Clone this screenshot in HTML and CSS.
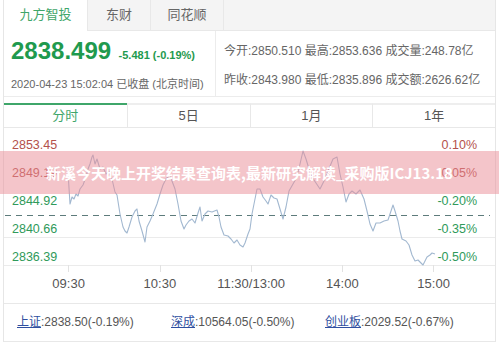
FILE: index.html
```html
<!DOCTYPE html>
<html lang="zh-CN">
<head>
    <meta charset="UTF-8">
    <meta name="viewport" content="width=device-width, initial-scale=1.0">
    <title>上证指数</title>
    <link rel="stylesheet" href="styles.css">
</head>
<body>
    <div class="page">
        <div class="tabs">
            <div class="tab active">九方智投</div>
            <div class="tab">东财</div>
            <div class="tab tab-last">同花顺</div>
        </div>

        <section class="quote">
            <div class="quote-main">
                <div class="price-line">
                    <span class="price">2838.499</span>
                    <span class="change">-5.481 (-0.19%)</span>
                </div>
                <div class="date">2020-04-23 15:02:04 已收盘 (北京时间)</div>
            </div>
            <div class="quote-stats">
                <div class="stat-row">今开:2850.510 最高:2853.636 成交量:248.78亿</div>
                <div class="stat-row">昨收:2843.980 最低:2835.896 成交额:2626.62亿</div>
            </div>
        </section><!--quote-->

        <div class="chart-tabs">
            <div class="ctab on">分时</div>
            <div class="ctab">5日</div>
            <div class="ctab">1月</div>
            <div class="ctab">1年</div>
        </div>

        <section class="chart">
            <svg class="plot" width="491" height="175" viewBox="4 129 491 175">
                <line class="grid" x1="4" y1="238.5" x2="495" y2="238.5"/>
                <line class="grid" x1="4" y1="266.5" x2="495" y2="266.5"/>
                <line class="tick" x1="68.5" y1="266" x2="68.5" y2="273"/>
                <line class="tick" x1="160.5" y1="266" x2="160.5" y2="273"/>
                <line class="tick" x1="251.5" y1="266" x2="251.5" y2="273"/>
                <line class="tick" x1="342.5" y1="266" x2="342.5" y2="273"/>
                <line class="tick" x1="433.5" y1="266" x2="433.5" y2="273"/>
                <line class="base" x1="5" y1="216.5" x2="490" y2="216.5"/>
                <polyline class="price-line-svg" points="68,173 70,205 72,198 74,200 76,195 78,197 80,190 83,186 86,178 88,170 90,165 92,158 93,156 95,165 97,160 100,170 103,168 106,175 109,172 112,180 115,193 117,196 120,215 123,228 125,232 127,234 129,228 132,218 135,212 137,210 139,222 142,232 145,243 147,228 150,222 153,215 157,205 160,195 163,186 166,180 170,176 172,182 175,190 178,205 181,222 184,230 186,226 189,222 192,220 195,224 198,214 200,208 202,222 205,215 208,212 212,213 217,211 219,218 221,228 224,236 228,237 231,240 234,244 237,241 240,246 243,248 245,244 248,235 250,230 252,215 255,200 257,190 260,190 263,198 266,202 268,205 271,196 274,199 277,200 280,210 283,220 286,208 289,192 293,185 297,178 300,165 303,152 306,160 309,170 312,178 316,184 320,190 324,182 328,172 333,160 337,158 340,175 343,188 346,203 349,195 352,192 356,195 360,191 364,200 367,212 370,225 373,232 376,224 380,224 384,222 388,221 391,212 393,206 395,212 398,222 400,232 402,240 406,242 409,246 412,256 415,262 418,261 421,264 423,266 425,262 427,258 430,256 432,254 435,255"/>
            </svg>
            <div class="row first"><span class="up">2853.45</span><span class="up">0.10%</span></div>
            <div class="row"><span class="up">2849.19</span><span class="up">0.05%</span></div>
            <div class="row"><span class="down">2844.92</span><span class="down">-0.20%</span></div>
            <div class="row"><span class="down">2840.66</span><span class="down">-0.35%</span></div>
            <div class="row"><span class="down">2836.39</span><span class="down">-0.50%</span></div>
            <div class="times">
                <span>09:30</span>
                <span>10:30</span>
                <span>11:30/13:00</span>
                <span>14:00</span>
                <span>15:00</span>
            </div>
        </section><!--chart-->

        <div class="indexes">
            <div class="index"><a href="#">上证</a>:2838.50(-0.19%)</div>
            <div class="index"><a href="#">深成</a>:10564.05(-0.50%)</div>
            <div class="index"><a href="#">创业板</a>:2029.52(-0.67%)</div>
        </div>
    </div>

    <div class="banner">新溪今天晚上开奖结果查询表,最新研究解读_采购版ICJ13.18</div>
</body>
</html>
```

FILE: styles.css
```css
html, body {
    margin: 0;
    padding: 0;
    box-sizing: border-box;
    font-family: 'Liberation Sans', 'Noto Sans CJK SC', sans-serif;
    color: #555;
}

body {
    position: relative;
    background: #fff;
    width: 499px;
    height: 347px;
    overflow: hidden;
}

.page {
    margin-left: 3px;
    width: 491px;
    border-left: 1px solid #e6e6e6;
    border-right: 1px solid #e6e6e6;
}

.tabs {
    display: flex;
    height: 30px;
    background: #f4f4f4;
    border-bottom: 1px solid #e8e8e8;
}

.tab {
    height: 30px;
    line-height: 29px;
    text-align: center;
    font-size: 13px;
    color: #666;
    border-right: 1px solid #e8e8e8;
}

.tab:nth-child(1) { width: 83px; }
.tab:nth-child(2) { width: 62px; }
.tab:nth-child(3) { width: 72px; }

.tab.active {
    height: 31px;
    background: #fff;
    color: #3fa66a;
}

.quote {
    display: flex;
    height: 65px;
    border-bottom: 1px solid #ececec;
}

.quote-main {
    width: 204px;
    padding-left: 7px;
    border-right: 1px solid #ececec;
}

.price-line {
    padding-top: 6px;
    line-height: 28px;
    white-space: nowrap;
}

.price {
    font-size: 24px;
    font-weight: bold;
    color: #1f9a4e;
}

.change {
    margin-left: 3px;
    font-size: 11px;
    font-weight: bold;
    color: #1f9a4e;
}

.date {
    margin-top: 7px;
    font-size: 11px;
    line-height: 16px;
    color: #666;
    white-space: nowrap;
}

.quote-stats {
    padding: 6px 0 0 8px;
}

.stat-row {
    font-size: 12px;
    line-height: 29px;
    color: #666;
    white-space: nowrap;
}

.chart-tabs {
    display: grid;
    grid-template-columns: repeat(4, 1fr);
    margin-top: 6px;
    border-bottom: 1px solid #e8e8e8;
}

.ctab {
    line-height: 22px;
    text-align: center;
    font-size: 13px;
    color: #555;
    border-top: 2px solid #eee;
    border-left: 1px solid #e8e8e8;
}

.ctab:first-child {
    border-left: none;
}

.ctab.on {
    color: #3fa66a;
    border-top-color: #3fa66a;
}

.chart {
    position: relative;
    height: 175px;
    border-bottom: 1px solid #e8e8e8;
}

.plot {
    position: absolute;
    top: 0;
    left: 0;
}

.grid {
    stroke: #ebebeb;
    stroke-width: 1;
}

.tick {
    stroke: #e2e2e2;
    stroke-width: 1;
}

.base {
    stroke: #5d7b7b;
    stroke-width: 1;
    stroke-dasharray: 6 5;
}

.price-line-svg {
    fill: none;
    stroke: #a2b8d0;
    stroke-width: 1.1;
    stroke-linejoin: round;
}

.row {
    position: relative;
    display: flex;
    justify-content: space-between;
    align-items: flex-end;
    height: 28px;
    padding: 0 18px 0 8px;
    font-size: 12.5px;
    line-height: 15px;
}

.row.first {
    height: 25px;
}

.up {
    color: #b4514c;
}

.down {
    color: #2f9a5a;
}

.times {
    position: relative;
    display: grid;
    grid-template-columns: repeat(5, 91.25px);
    justify-items: center;
    padding-left: 19px;
    height: 38px;
    line-height: 38px;
    font-size: 13px;
    color: #555;
}

.indexes {
    display: flex;
    height: 37px;
    line-height: 37px;
    padding-left: 13px;
    border-bottom: 1px solid #e8e8e8;
    font-size: 12px;
    color: #555;
}

.index {
    width: 154px;
    white-space: nowrap;
}

.index a {
    color: #2f4fa0;
    text-decoration: underline;
}

.banner {
    position: absolute;
    top: 151px;
    left: 0;
    right: 0;
    height: 43px;
    line-height: 43px;
    background: rgba(234, 140, 150, 0.5);
    color: #fff;
    font-family: 'Noto Sans CJK SC', sans-serif;
    font-weight: bold;
    font-size: 15px;
    text-align: center;
    white-space: nowrap;
}
```
